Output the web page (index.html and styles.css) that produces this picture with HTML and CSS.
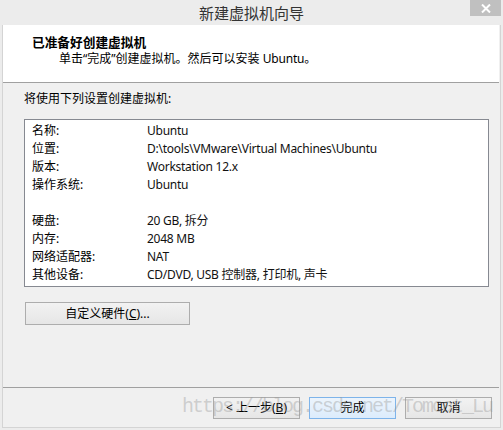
FILE: index.html
```html
<!DOCTYPE html>
<html lang="zh-CN">
<head>
<meta charset="utf-8">
<title>新建虚拟机向导</title>
<link rel="stylesheet" href="styles.css">
</head>
<body>
<div class="window">
  <div class="titlebar">
    <span class="spacer"></span>
    <span class="title">新建虚拟机向导</span>
    <span class="close"><svg width="10" height="9" viewBox="0 0 10 9"><path d="M1 0.5 L9 8.5 M9 0.5 L1 8.5" stroke="#fff" stroke-width="2" fill="none"/></svg></span>
  </div>
  <div class="client">
    <div class="header">
      <div class="heading">已准备好创建虚拟机</div>
      <div class="subtext">单击“完成”创建虚拟机。然后可以安装 <span class="latin">Ubuntu</span>。</div>
    </div>
    <div class="body">
      <div class="intro">将使用下列设置创建虚拟机:</div>
      <div class="summary">
        <div class="row"><span class="label">名称:</span><span class="value">Ubuntu</span></div>
        <div class="row"><span class="label">位置:</span><span class="value">D:\tools\VMware\Virtual Machines\Ubuntu</span></div>
        <div class="row"><span class="label">版本:</span><span class="value">Workstation 12.x</span></div>
        <div class="row"><span class="label">操作系统:</span><span class="value">Ubuntu</span></div>
        <div class="row"></div>
        <div class="row"><span class="label">硬盘:</span><span class="value">20 GB, 拆分</span></div>
        <div class="row"><span class="label">内存:</span><span class="value">2048 MB</span></div>
        <div class="row"><span class="label">网络适配器:</span><span class="value">NAT</span></div>
        <div class="row"><span class="label">其他设备:</span><span class="value">CD/DVD, USB 控制器, 打印机, 声卡</span></div>
      </div>
      <div class="btn custom">自定义硬件(<u>C</u>)...</div>
    </div>
    <div class="footer">
      <div class="btn">&lt; 上一步(<u>B</u>)</div>
      <div class="btn default">完成</div>
      <div class="btn">取消</div>
    </div>
    <div class="watermark">https://blog.csdn.net/Tomcat_Lu</div>
  </div>
</div>
</body>
</html>
```
FILE: styles.css
```css
html, body {
  margin: 0;
  padding: 0;
}
body {
  background: #ececec;
  font-family: "Noto Sans", "Noto Sans CJK SC", sans-serif;
  font-size: 12px;
  color: #000;
}
.window {
  width: 503px;
  height: 430px;
  display: flex;
  flex-direction: column;
  background: #ececec;
}
.titlebar {
  height: 25px;
  display: grid;
  grid-template-columns: 1fr auto 1fr;
  flex: none;
}
.title {
  font-family: "Noto Sans CJK SC", sans-serif;
  font-size: 15px;
  line-height: 25px;
  color: #333;
}
.close {
  justify-self: end;
  align-self: start;
  width: 31px;
  height: 16px;
  margin-right: 2px;
  background: #c0c0c0;
  display: flex;
  align-items: center;
  justify-content: center;
}
.close svg { display: block; }
.client {
  position: relative;
  margin: 0 2px;
  height: 402px;
  border: 1px solid #d4d4d4;
  border-top: none;
  background: #f0f0f0;
  display: flex;
  flex-direction: column;
}
.header {
  background: #fff;
  border-bottom: 1px solid #a0a0a0;
  margin-right: 1px;
  padding: 8px 0 0 29px;
  box-sizing: border-box;
  height: 58px;
}
.heading {
  font-family: "Noto Sans CJK SC", sans-serif;
  font-weight: bold;
  font-size: 12.7px;
  line-height: 17px;
}
.subtext {
  padding-left: 27px;
  line-height: 18px;
}
.latin {
  letter-spacing: -0.2px;
}
.body {
  flex: 1;
  padding: 7px 0 0 21px;
}
.intro {
  line-height: 18px;
}
.summary {
  margin-top: 11px;
  width: 465px;
  box-sizing: border-box;
  border: 1px solid #868991;
  background: #fff;
  padding: 2px 0 2px 7px;
}
.row {
  display: flex;
  height: 18px;
  line-height: 18px;
}
.label {
  width: 115px;
  flex: none;
}
.value {
  color: #111;
  letter-spacing: -0.25px;
}
.btn {
  box-sizing: border-box;
  height: 22px;
  width: 87px;
  border: 1px solid #adadad;
  background: linear-gradient(#f2f2f2, #e6e6e6);
  text-align: center;
  line-height: 20px;
}
.btn.custom {
  margin-top: 15px;
  margin-left: 1px;
  width: 165px;
  height: 23px;
  line-height: 21px;
}
.btn.default {
  border-color: #7eb4ea;
  background: linear-gradient(#ecf4fc, #dcecfc);
}
.footer {
  border-top: 1px solid #a0a0a0;
  margin-right: 1px;
  display: flex;
  justify-content: flex-end;
  gap: 9px;
  padding: 9px 7px 8px 0;
}
.watermark {
  position: absolute;
  left: 179px;
  top: 370px;
  font-family: "Liberation Mono", monospace;
  font-size: 20px;
  letter-spacing: -2px;
  color: rgba(150, 150, 150, 0.4);
  pointer-events: none;
  white-space: nowrap;
}
```
